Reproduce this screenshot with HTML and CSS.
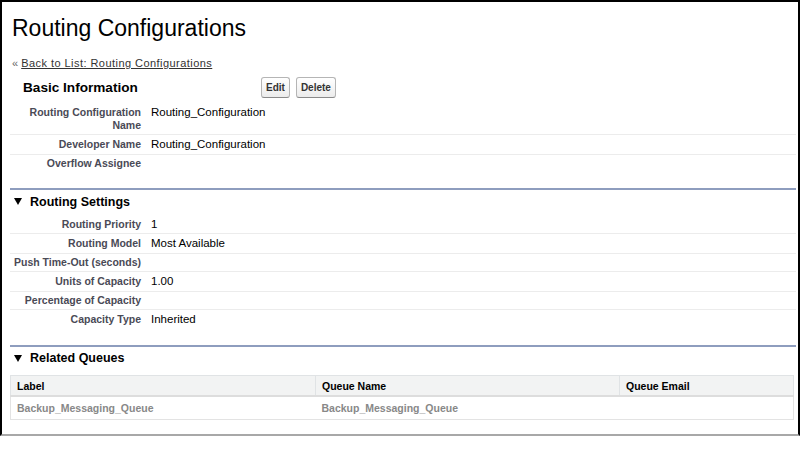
FILE: index.html
```html
<!DOCTYPE html>
<html lang="en">
<head>
  <meta charset="UTF-8" />
  <title>Routing Configurations</title>
  <link rel="stylesheet" href="styles.css">
</head>
<body>

  <div class="frame">
    <h1>Routing Configurations</h1>
    <div class="back">&laquo; <a href="#">Back to List: Routing Configurations</a></div>

    <!-- Basic Information -->
    <div class="block">
      <div class="block-head">
        <h2 class="block-title">Basic Information</h2>
        <div class="buttons">
          <button class="btn">Edit</button>
          <button class="btn">Delete</button>
        </div>
      </div>
      <div class="detail">
        <div class="row">
          <div class="label">Routing Configuration<br>Name</div>
          <div class="value">Routing_Configuration</div>
        </div>
        <div class="row">
          <div class="label">Developer Name</div>
          <div class="value">Routing_Configuration</div>
        </div>
        <div class="row last">
          <div class="label">Overflow Assignee</div>
          <div class="value"></div>
        </div>
      </div>
    </div>

    <!-- Routing Settings -->
    <div class="block section">
      <h3 class="section-title">
        <svg class="twisty" width="8" height="7" viewBox="0 0 8 7"><polygon points="0,0 8,0 4,7" fill="#000"/></svg>
        Routing Settings
      </h3>
      <div class="detail">
        <div class="row">
          <div class="label">Routing Priority</div>
          <div class="value">1</div>
        </div>
        <div class="row">
          <div class="label">Routing Model</div>
          <div class="value">Most Available</div>
        </div>
        <div class="row">
          <div class="label">Push Time-Out (seconds)</div>
          <div class="value"></div>
        </div>
        <div class="row">
          <div class="label">Units of Capacity</div>
          <div class="value">1.00</div>
        </div>
        <div class="row">
          <div class="label">Percentage of Capacity</div>
          <div class="value"></div>
        </div>
        <div class="row last">
          <div class="label">Capacity Type</div>
          <div class="value">Inherited</div>
        </div>
      </div>
    </div>

    <!-- Related Queues -->
    <div class="block section">
      <h3 class="section-title">
        <svg class="twisty" width="8" height="7" viewBox="0 0 8 7"><polygon points="0,0 8,0 4,7" fill="#000"/></svg>
        Related Queues
      </h3>
      <table class="list">
        <tr>
          <th class="col-label">Label</th>
          <th class="col-name">Queue Name</th>
          <th>Queue Email</th>
        </tr>
        <tr>
          <td>Backup_Messaging_Queue</td>
          <td>Backup_Messaging_Queue</td>
          <td></td>
        </tr>
      </table>
    </div>
  </div>

</body>
</html>
```

FILE: styles.css
```css
body {
  margin: 0;
  background: #ffffff;
  font-family: "Liberation Sans", Arial, sans-serif;
  color: #000;
}

.frame {
  box-sizing: border-box;
  width: 800px;
  height: 436px;
  border: 2px solid #000;
  border-bottom-color: #a8a8a8;
  padding: 12px 2px 0 8px;
}

h1 {
  margin: 0 0 0 2px;
  font-size: 23px;
  font-weight: normal;
  line-height: 28px;
  color: #000;
}

.back {
  margin: 14px 0 0 2px;
  font-size: 11px;
  line-height: 14px;
  color: #666;
}

.back a {
  color: #333;
  letter-spacing: 0.45px;
  text-decoration: underline;
}

/* Blocks */
.block-head {
  display: flex;
  align-items: center;
  height: 26px;
  margin-top: 4px;
}

.block-title {
  width: 238px;
  margin: 0;
  padding-left: 13px;
  font-size: 13.6px;
  font-weight: bold;
}

.buttons {
  display: flex;
  gap: 6px;
}

.btn {
  height: 21px;
  padding: 0 4px;
  font-family: "Liberation Sans", Arial, sans-serif;
  font-size: 10px;
  font-weight: bold;
  color: #333;
  background: linear-gradient(#ffffff, #ececec);
  border: 1px solid #b5b5b5;
  border-bottom-color: #8a8a8a;
  border-radius: 3px;
}

.detail {
  margin-top: 2.5px;
}

.row {
  display: grid;
  grid-template-columns: 131px 1fr;
  column-gap: 10px;
  align-items: baseline;
  border-bottom: 1px solid #ececec;
  padding: 2px 0 2.5px;
}

.row.last {
  border-bottom: none;
}

.label {
  text-align: right;
  white-space: nowrap;
  font-size: 10.5px;
  font-weight: bold;
  line-height: 13px;
  color: #4a4a56;
}

.value {
  font-size: 11.5px;
  line-height: 14px;
}

.section {
  border-top: 2px solid #8e9dbe;
  margin-top: 16px;
}

.section-title {
  display: flex;
  align-items: center;
  gap: 8px;
  margin: 0;
  padding: 3.5px 0 0 4px;
  height: 16px;
  font-size: 12.5px;
  font-weight: bold;
}

.section .detail {
  margin-top: 5px;
}

/* Related list */
.list {
  width: 784px;
  margin-top: 9px;
  border-collapse: collapse;
  font-size: 10.5px;
}

.list th {
  text-align: left;
  background: #f2f3f3;
  border: 1px solid #e0e3e5;
  border-bottom: 2px solid #dddddd;
  height: 19px;
  padding: 0 6px;
  font-weight: bold;
  color: #000;
}

.list td {
  height: 22px;
  padding: 0 6px;
  border-bottom: 1px solid #e3e3e3;
  font-weight: bold;
  color: #888;
}

.list tr td:first-child {
  border-left: 1px solid #e3e3e3;
}

.list tr td:last-child {
  border-right: 1px solid #e3e3e3;
}

.col-label {
  width: 292px;
}

.col-name {
  width: 291px;
}
```
